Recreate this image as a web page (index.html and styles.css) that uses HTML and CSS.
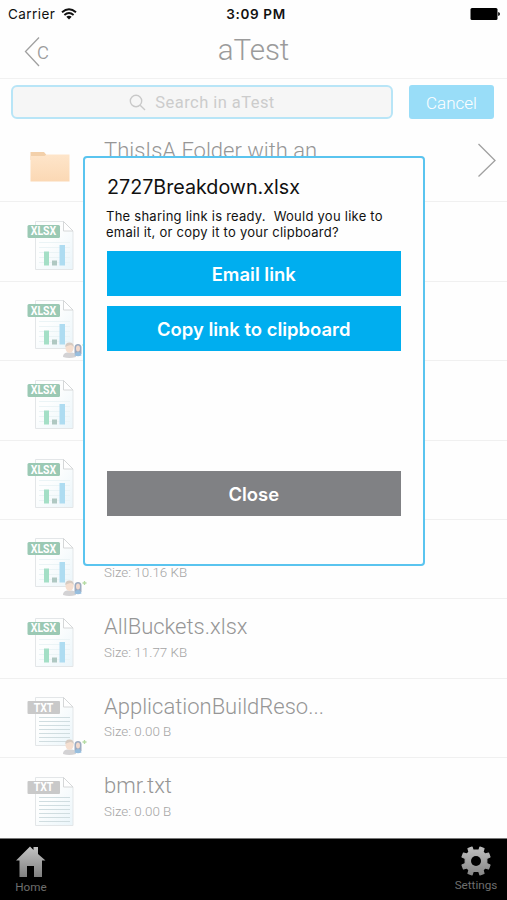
FILE: index.html
```
<!DOCTYPE html>
<html lang="en">
<head>
<meta charset="utf-8">
<title>aTest</title>
<link rel="stylesheet" href="styles.css">
</head>
<body>
<svg class="defs" width="0" height="0">
  <defs>
    <linearGradient id="metal" x1="0" y1="0" x2="0" y2="1"><stop offset="0" stop-color="#c4c4c4"/><stop offset="1" stop-color="#808080"/></linearGradient>
    <linearGradient id="gear" gradientUnits="userSpaceOnUse" x1="0" y1="-15" x2="0" y2="15"><stop offset="0" stop-color="#c0c0c0"/><stop offset="1" stop-color="#858585"/></linearGradient>
    <linearGradient id="peach" x1="0" y1="0" x2="0" y2="1"><stop offset="0" stop-color="#fee5ca"/><stop offset="1" stop-color="#fbd8b4"/></linearGradient>
    <linearGradient id="paper" x1="0" y1="0" x2="1" y2="1"><stop offset="0.4" stop-color="#fdfefe"/><stop offset="1" stop-color="#eaf5fa"/></linearGradient>
    <symbol id="page" viewBox="0 0 50 52">
      <path d="M8.500 1.500H36.500L46 11V49.500H8.500Z" fill="url(#paper)" stroke="#e3e6e8"/>
      <path d="M36.500 1.500V11H46Z" fill="#fff" stroke="#d5d7d8"/>
    </symbol>
    <symbol id="xlsx" viewBox="0 0 50 52">
      <use href="#page"/>
      <path d="M12 22.500H43M12 27.500H43M12 32.500H43M12 37.500H43M12 42.500H43" stroke="#ebf4f6" fill="none"/>
      <rect x="17" y="31.500" width="5" height="14" fill="#a4dfc6"/>
      <rect x="25" y="40.500" width="5" height="5" fill="#afc8c2"/>
      <rect x="32.500" y="25" width="5.500" height="20.500" fill="#aedcf1"/>
      <rect x="0.500" y="5" width="32.500" height="13" rx="1.500" fill="#9bc9b4"/>
    </symbol>
    <symbol id="txt" viewBox="0 0 50 52">
      <use href="#page"/>
      <path d="M12 21.500H43M12 25.500H43M12 29.500H43M12 33.500H43M12 37.500H43M12 41.500H43M12 45.500H43" stroke="#d0dde0" fill="none"/>
      <rect x="0.500" y="5" width="32.500" height="13" rx="1" fill="#c9c9c9"/>
    </symbol>
    <symbol id="people" viewBox="0 0 26 18">
      <path d="M1 15Q1 11 5 10.500H10Q14 11 14 15Q7 17 1 15Z" fill="#d3d2d4"/>
      <ellipse cx="7.500" cy="6" rx="4" ry="5" fill="#f5dfd0"/>
      <path d="M3.300 5Q3 0.500 7.500 0.500T11.700 5Q10 2.500 7.500 3.200T3.300 5Z" fill="#d6cbc2"/>
      <path d="M12.500 12V5Q13 2 16 2T19.500 5V12Z" fill="#9dabc0"/>
      <ellipse cx="16" cy="6.500" rx="2" ry="3" fill="#f2d9cd"/>
      <path d="M12.500 13.500Q13 10 16 10T19.500 13.500Q16 15 12.500 13.500Z" fill="#97bede"/>
      <path d="M22.500 1V5M20.500 3H24.500" stroke="#b5dba4" stroke-width="1.300"/>
    </symbol>
  </defs>
</svg>
<div class="screen">
  <div class="status">
    <div class="carrier"><span>Carrier</span>
      <svg width="16" height="12" viewBox="0 0 16 12"><g fill="none" stroke="#111" stroke-width="1.900"><path d="M1 4.300Q8 -1.700 15 4.300"/><path d="M3.400 7Q8 3.200 12.600 7"/></g><path d="M5.300 8.700Q8 6.700 10.700 8.700L8 11.500Z" fill="#111"/></svg>
    </div>
    <span class="clock">3:09 PM</span>
    <svg class="battery" width="31" height="12" viewBox="0 0 31 12"><rect x="0.500" y="0" width="27" height="12" rx="1.500"/><path d="M28.200 4Q30 4.500 30 6T28.200 8Z"/></svg>
  </div>
  <header class="nav">
    <div class="back"><svg width="16" height="32" viewBox="0 0 16 32"><path d="M15 1.500L1.500 15.500L15 30" fill="none" stroke="#a0a0a0" stroke-width="1.300"/></svg><span>c</span></div>
    <h1>aTest</h1>
    <div></div>
  </header>
  <div class="search-row">
    <div class="search"><svg width="17" height="17" viewBox="0 0 17 17"><g fill="none" stroke="#c9c9c9" stroke-width="1.400"><circle cx="7" cy="7" r="5.700"/><path d="M11.200 11.200L16 16"/></g></svg><span>Search in aTest</span></div>
    <div class="cancel"><span>Cancel</span></div>
  </div>
  <main class="list">
    <div class="row first">
      <div class="icon"><svg class="folder" width="40" height="31" viewBox="0 0 40 31"><path d="M0.500 1H14L16.500 4H39V9H0.500Z" fill="#f3d0aa"/><path d="M0.500 5H14.500L16.500 3.500H39.500V30.500H0.500Z" fill="url(#peach)"/></svg></div>
      <div class="info"><div class="name">ThisIsA Folder with an</div></div>
      <svg class="chevron" width="20" height="36" viewBox="0 0 20 36"><path d="M1.500 2L18 18.500L1.500 34.500" fill="none" stroke="#a0a0a0" stroke-width="1.300"/></svg>
    </div>
    <div class="row"><div class="icon"><svg class="file"><use href="#xlsx"/></svg><span class="tag">XLSX</span></div></div>
    <div class="row"><div class="icon"><svg class="file"><use href="#xlsx"/></svg><span class="tag">XLSX</span><svg class="people"><use href="#people"/></svg></div></div>
    <div class="row"><div class="icon"><svg class="file"><use href="#xlsx"/></svg><span class="tag">XLSX</span></div></div>
    <div class="row"><div class="icon"><svg class="file"><use href="#xlsx"/></svg><span class="tag">XLSX</span></div></div>
    <div class="row"><div class="icon"><svg class="file"><use href="#xlsx"/></svg><span class="tag">XLSX</span><svg class="people"><use href="#people"/></svg></div><div class="info"><div class="name"></div><div class="size">Size: 10.16 KB</div></div></div>
    <div class="row"><div class="icon"><svg class="file"><use href="#xlsx"/></svg><span class="tag">XLSX</span></div><div class="info"><div class="name">AllBuckets.xlsx</div><div class="size">Size: 11.77 KB</div></div></div>
    <div class="row"><div class="icon"><svg class="file"><use href="#txt"/></svg><span class="tag">TXT</span><svg class="people"><use href="#people"/></svg></div><div class="info"><div class="name">ApplicationBuildReso...</div><div class="size">Size: 0.00 B</div></div></div>
    <div class="row"><div class="icon"><svg class="file"><use href="#txt"/></svg><span class="tag">TXT</span></div><div class="info"><div class="name">bmr.txt</div><div class="size">Size: 0.00 B</div></div></div>
  </main>
  <footer class="tabs">
    <div class="tab home"><svg width="32" height="33" viewBox="0 0 32 33"><path d="M1 15.500L15 1.500L18.500 5V2H23V9L30.500 15.500H27V32H19V21H12V32H4.500V15.500Z" fill="url(#metal)"/></svg><span>Home</span></div>
    <div class="tab settings"><svg width="30" height="30" viewBox="-15 -15 30 30"><path d="M-2.800 -10.500L-1.500 -11L1.500 -11L2.800 -10.500L4 -14L8 -12.500L7 -9L9 -7L12.500 -8L14 -4L10.800 -2.500V2.500L14 4L12.500 8L9 7L7 9L8 12.500L4 14L2.800 10.500H-2.800L-4 14L-8 12.500L-7 9L-9 7L-12.500 8L-14 4L-10.800 2.500V-2.500L-14 -4L-12.500 -8L-9 -7L-7 -9L-8 -12.500L-4 -14Z" fill="url(#gear)" stroke="url(#gear)" stroke-width="1.200" stroke-linejoin="round"/><circle r="5" fill="#000"/></svg><span>Settings</span></div>
  </footer>
  <section class="modal">
    <h2>2727Breakdown.xlsx</h2>
    <p>The sharing link is ready.&nbsp; Would you like to<br>email it, or copy it to your clipboard?</p>
    <div class="btn"><span>Email link</span></div>
    <div class="btn copy"><span>Copy link to clipboard</span></div>
    <div class="btn close"><span>Close</span></div>
  </section>
</div>
</body>
</html>
```
FILE: styles.css
```
* { box-sizing: border-box; }
body { margin: 0; background: #fff; font-family: Roboto, sans-serif; }
.defs { position: absolute; }
.screen { position: relative; width: 507px; height: 900px; overflow: hidden; display: flex; flex-direction: column; background: #fefefe; }
.status { height: 27px; padding: 0 6px 0 8px; display: grid; grid-template-columns: 1fr auto 1fr; align-items: center; font: 500 13.5px Inter, sans-serif; color: #111; }
.carrier { display: flex; align-items: center; gap: 6px; font-weight: 400; letter-spacing: 0.450px; }
.clock { font-weight: 600; padding-left: 3px; letter-spacing: 0.650px; }
.battery { justify-self: end; }
.nav { height: 52px; border-bottom: 1px solid #f1f1f1; display: grid; grid-template-columns: 1fr auto 1fr; align-items: center; padding: 0 24px; color: #9b9b9b; }
.back { display: flex; align-items: center; margin-top: -2px; font-size: 23px; font-weight: 300; line-height: 32px; }
.back span { margin-left: -3px; }
.nav h1 { margin: -6px 0 0; font-size: 29.500px; font-weight: 300; line-height: 36px; }
.search-row { height: 44px; padding: 6px 13px 3px 11px; display: flex; gap: 16px; }
.search { width: 382px; height: 34px; border: 2px solid #b8e5f7; border-radius: 6px; background: #f6f6f6; display: flex; align-items: center; justify-content: center; gap: 9px; color: #ccc; font: 400 16.500px Roboto, sans-serif; letter-spacing: 0.450px; }
.cancel { width: 85px; height: 34px; border-radius: 3px; background: #99ddf8; display: flex; align-items: center; justify-content: center; color: #fff; font-size: 17px; font-weight: 300; padding-top: 2px; }
.list { height: 715px; }
.row { height: 79.400px; border-bottom: 1px solid #f0f0f0; display: flex; }
.row:last-child { border-bottom: 0; }
.icon { position: relative; width: 104px; flex: none; padding: 17.500px 0 0 27px; }
.file { display: block; width: 50px; height: 52px; }
.folder { display: block; margin: 10.500px 0 0 3px; }
.tag { position: absolute; left: 27px; top: 22px; width: 33px; text-align: center; font: 700 12.500px/14px Roboto, sans-serif; color: #fff; transform: scaleX(0.840); }
.people { position: absolute; left: 62px; top: 60px; width: 26px; height: 18px; }
.info { flex: 1; padding-top: 13px; color: #969696; font-weight: 300; }
.name { height: 28px; font-size: 22px; line-height: 29px; white-space: nowrap; }
.size { margin-top: 4.500px; font-size: 13.400px; line-height: 16px; color: #a5a5a5; }
.chevron { margin: 19px 10px 0 0; }
.tabs { height: 62px; background: #000; border-top: 1px solid #777; display: flex; justify-content: space-between; color: #6e6e6e; font-size: 11.700px; }
.tab { display: flex; flex-direction: column; align-items: center; width: 62px; }
.tab svg { margin-top: 6px; }
.tab span { line-height: 15px; margin-top: 2px; }
.settings svg { margin-top: 7px; }
.modal { position: absolute; left: 83px; top: 156px; width: 342px; height: 410px; border: 2px solid #5ac4ef; border-radius: 4px; background: #fefefe; padding: 16.500px 22.500px 0 22px; color: #111; font-family: Inter, sans-serif; display: flex; flex-direction: column; }
.modal h2 { margin: 0; font-size: 19.700px; line-height: 24px; font-weight: 400; }
.modal p { margin: 9px 0 0 -1px; font-size: 13px; line-height: 16px; letter-spacing: 0.250px; white-space: nowrap; }
.btn { height: 45px; margin-top: 11.500px; background: #00aeef; color: #fff; font-size: 18.450px; font-weight: 600; display: flex; align-items: center; justify-content: center; padding-top: 1px; }
.copy { margin-top: 10px; }
.close { margin-top: 120px; background: #808184; }
```
